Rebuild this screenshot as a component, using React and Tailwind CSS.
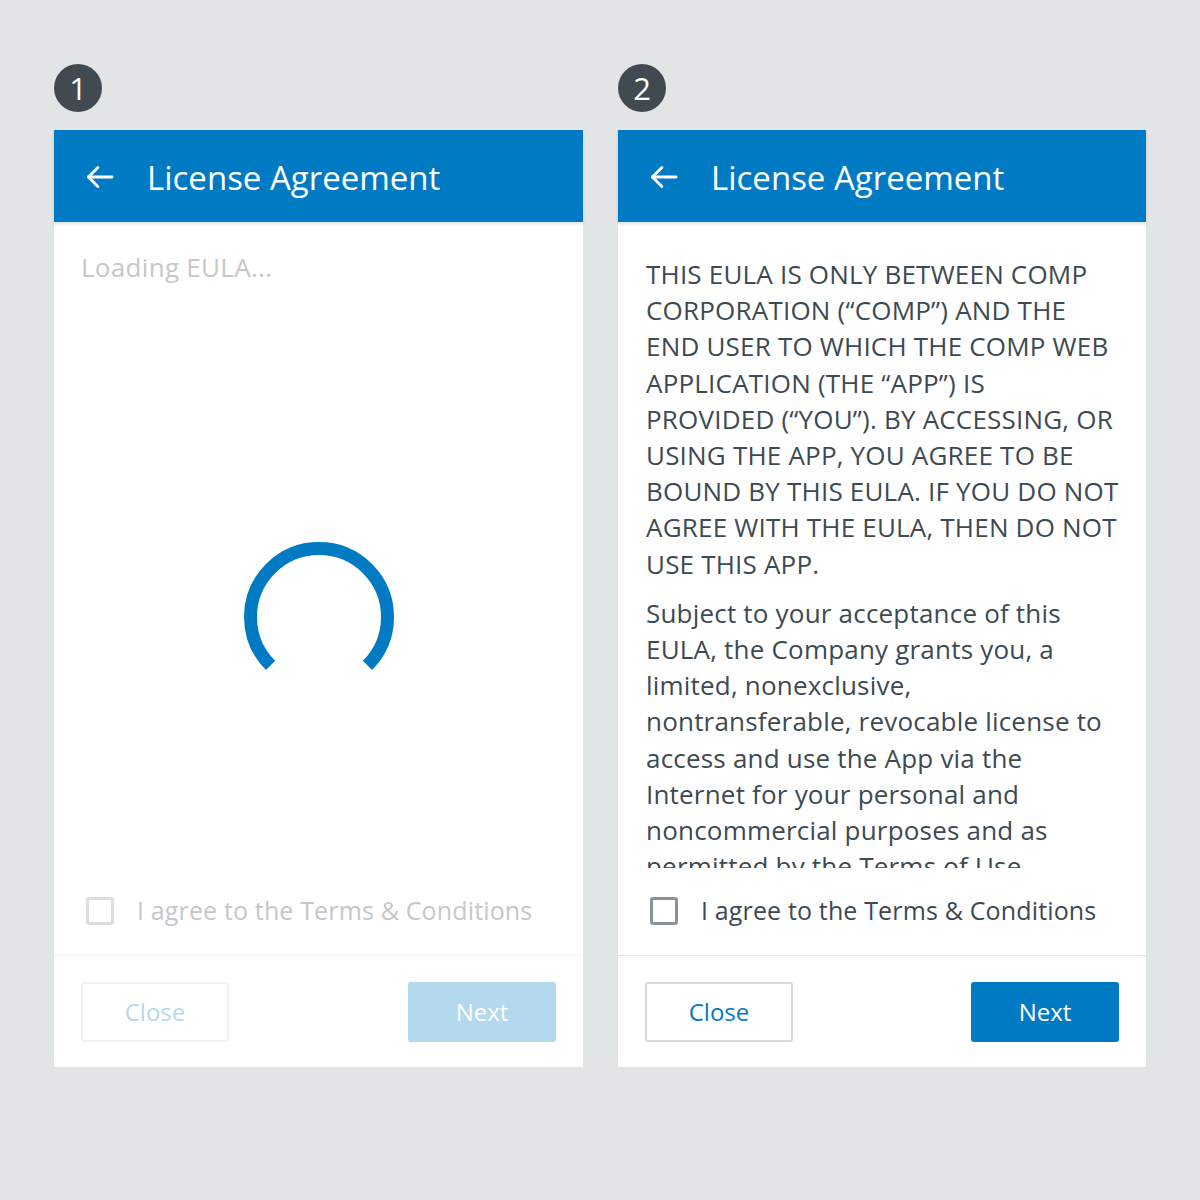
import React from 'react';

const FONT = { fontFamily: '"Open Sans", "Liberation Sans", sans-serif' };

function Badge({ n }) {
  return (
    <div className="w-12 h-12 rounded-full bg-[#414a50] text-white flex items-center justify-center text-[31px] leading-none mb-[18px]">
      {n}
    </div>
  );
}

function BackArrow() {
  return (
    <svg width="34" height="34" viewBox="0 0 24 24" fill="none" stroke="white" strokeWidth="2" strokeLinecap="round" strokeLinejoin="round">
      <path d="M20.5 12H3.8" />
      <path d="M10.5 5.3L3.8 12L10.5 18.7" />
    </svg>
  );
}

function Header() {
  return (
    <div className="h-[92px] bg-[#007bc3] flex items-center pl-[29px] relative z-10 shadow-[0_2px_3px_rgba(0,0,0,0.12)]">
      <div className="mt-[2px]">
        <BackArrow />
      </div>
      <span className="ml-[30px] text-white text-[33px] leading-none mt-[2px]">License Agreement</span>
    </div>
  );
}

function Spinner() {
  // 270 degree arc with the gap at the bottom
  const r = 68.5;
  const cx = 75;
  const cy = 75;
  const a1 = (135 * Math.PI) / 180;
  const a2 = (45 * Math.PI) / 180;
  const x1 = cx + r * Math.cos(a1);
  const y1 = cy + r * Math.sin(a1);
  const x2 = cx + r * Math.cos(a2);
  const y2 = cy + r * Math.sin(a2);
  return (
    <svg width="150" height="150" viewBox="0 0 150 150">
      <path d={`M${x1} ${y1} A${r} ${r} 0 1 1 ${x2} ${y2}`} fill="none" stroke="#007bc3" strokeWidth="13" />
    </svg>
  );
}

function Footer({ disabled }) {
  return (
    <>
      <div className="h-[87px] flex items-center pl-[32px]">
        <div className={`w-[28px] h-[28px] rounded-[3px] border-[3px] mt-[-2px] ${disabled ? 'border-[#dadee0]' : 'border-[#8b9398]'}`} />
        <span className={`ml-[23px] text-[25px] tracking-[0.15px] leading-[30px] mb-[4px] ${disabled ? 'text-[#c3c8cb]' : 'text-[#3d4a52]'}`}>
          I agree to the Terms &amp; Conditions
        </span>
      </div>
      <div className={`h-px ${disabled ? 'bg-[#f0f2f3]' : 'bg-[#e3e6e8]'}`} />
      <div className="flex justify-between items-center px-[27px] pt-[26px] pb-[25px]">
        <button className={`w-[148px] h-[60px] rounded-[3px] border-2 bg-white text-[24px] ${disabled ? 'border-[#f0f2f3] text-[#b4d8ed]' : 'border-[#d6dadc] text-[#007bc3]'}`}>
          Close
        </button>
        <button className={`w-[148px] h-[60px] rounded-[3px] text-[24px] text-white ${disabled ? 'bg-[#b4d8ed]' : 'bg-[#007bc3]'}`}>
          Next
        </button>
      </div>
    </>
  );
}

const para1 = [
  'THIS EULA IS ONLY BETWEEN COMP',
  'CORPORATION (\u201CCOMP\u201D) AND THE',
  'END USER TO WHICH THE COMP WEB',
  'APPLICATION (THE \u201CAPP\u201D) IS',
  'PROVIDED (\u201CYOU\u201D). BY ACCESSING, OR',
  'USING THE APP, YOU AGREE TO BE',
  'BOUND BY THIS EULA. IF YOU DO NOT',
  'AGREE WITH THE EULA, THEN DO NOT',
  'USE THIS APP.',
];

const para2 = [
  'Subject to your acceptance of this',
  'EULA, the Company grants you, a',
  'limited, nonexclusive,',
  'nontransferable, revocable license to',
  'access and use the App via the',
  'Internet for your personal and',
  'noncommercial purposes and as',
  'permitted by the Terms of Use',
  'and any other applicable terms.',
];

export default function App() {
  return (
    <div className="w-[1200px] h-[1200px] bg-[#e1e5e6] pl-[54px] pt-[64px]" style={FONT}>
      <div className="grid grid-cols-[529px_528px] gap-x-[35px]">
        {/* Step 1: loading */}
        <div>
          <Badge n="1" />
          <div className="bg-white">
            <Header />
            <div className="h-[646px] px-[27px] pt-[27px]">
              <p className="text-[26px] tracking-[0.3px] leading-[36px] text-[#c3c8cb]">Loading EULA...</p>
              <div className="flex justify-center mt-[257px]">
                <Spinner />
              </div>
            </div>
            <Footer disabled />
          </div>
        </div>

        {/* Step 2: loaded */}
        <div>
          <Badge n="2" />
          <div className="bg-white">
            <Header />
            <div className="h-[646px] overflow-hidden px-[28px] pt-[34px] text-[26px] tracking-[0.2px] leading-[36.2px] text-[#3d4a52]">
              <p>
                {para1.map((l) => (
                  <span key={l} className="block whitespace-nowrap">{l}</span>
                ))}
              </p>
              <p className="mt-[13px]">
                {para2.map((l) => (
                  <span key={l} className="block whitespace-nowrap">{l}</span>
                ))}
              </p>
            </div>
            <Footer />
          </div>
        </div>
      </div>
    </div>
  );
}
